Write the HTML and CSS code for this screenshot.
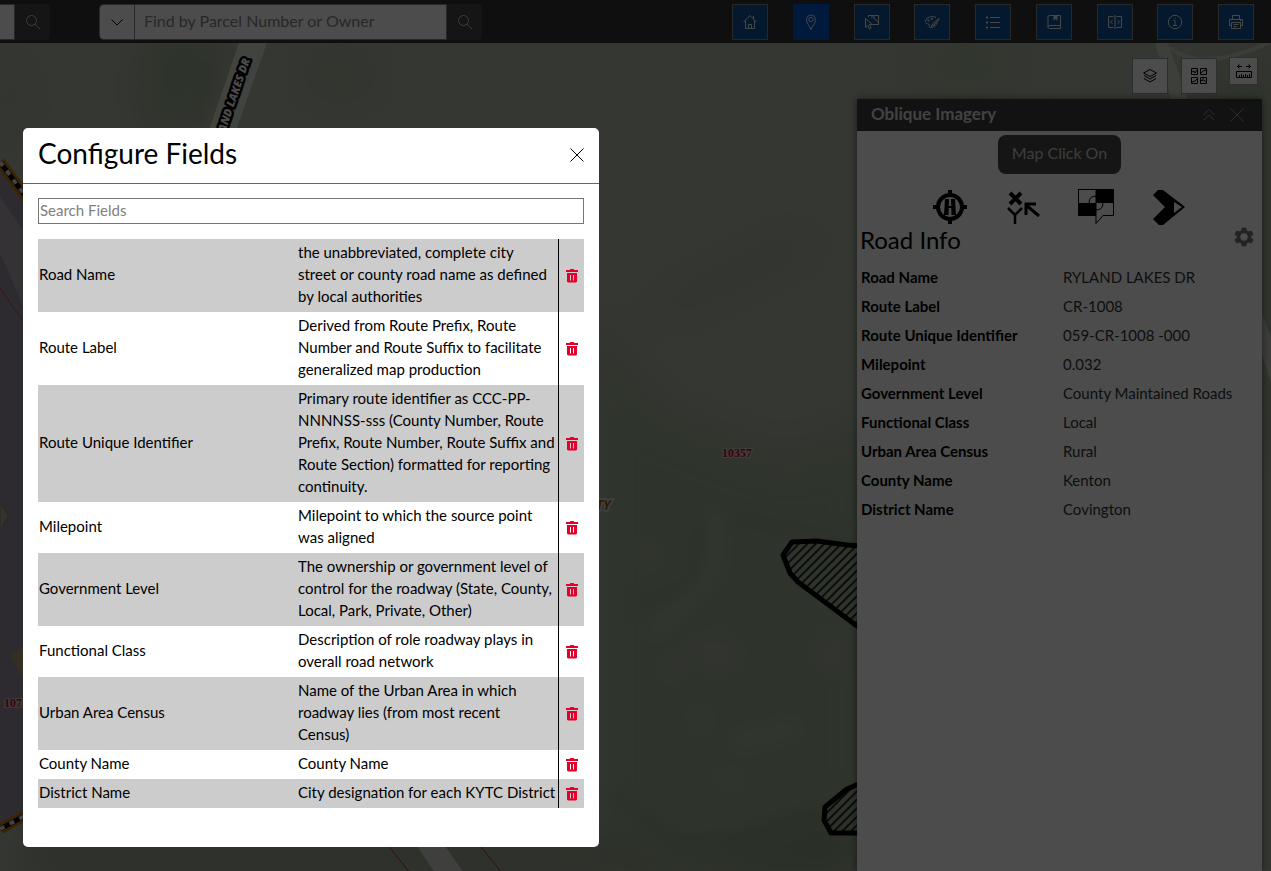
FILE: index.html
```html
<!DOCTYPE html>
<html lang="en">
<head>
  <meta charset="UTF-8" />
  <meta name="viewport" content="width=device-width, initial-scale=1.0" />
  <title>Configure Fields</title>
  <link rel="stylesheet" href="styles.css">
</head>
<body>
  <div class="app">
    <header class="topbar">
      <form class="search search-address">
        <input type="text" class="search-input" aria-label="Find address">
        <button type="button" class="search-btn" aria-label="Search address">
          <svg class="icon" viewBox="0 0 16 16"><circle cx="6.500" cy="6.500" r="5"/><path d="M10 10l5 5"/></svg>
        </button>
      </form>
      <form class="search search-parcel">
        <button type="button" class="search-menu" aria-label="Search in">
          <svg class="icon" viewBox="0 0 16 16"><path d="M2.500 5.500l5.500 5.500 5.500-5.500"/></svg>
        </button>
        <input type="text" class="search-input" placeholder="Find by Parcel Number or Owner" aria-label="Find by Parcel Number or Owner">
        <button type="button" class="search-btn" aria-label="Search parcels">
          <svg class="icon" viewBox="0 0 16 16"><circle cx="6.500" cy="6.500" r="5"/><path d="M10 10l5 5"/></svg>
        </button>
      </form>

      <nav class="tools">
        <button type="button" class="tool" aria-label="Home">
          <svg class="icon" viewBox="0 0 16 16"><path d="M1.500 8L8 1.500 14.500 8M3.500 6.500v8h9v-8M6.500 14.500v-4h3v4M11.500 2v3"/></svg>
        </button>
        <button type="button" class="tool active" aria-label="Location">
          <svg class="icon" viewBox="0 0 16 16"><path d="M8 15.500C6.500 11.500 3.500 9.500 3.500 5.500a4.500 4.500 0 0 1 9 0c0 4-3 6-4.500 10z"/><circle cx="8" cy="5.500" r="2.200"/></svg>
        </button>
        <button type="button" class="tool" aria-label="Select">
          <svg class="icon" viewBox="0 0 16 16"><path d="M4.500 3V1.500h10v9H9M10 1.500v3l4.500 4M8 1.500v3"/><path d="M1.500 4.500v9l2.500-2 1.500 3.500 1.500-1L5.500 10.500H8.500z"/></svg>
        </button>
        <button type="button" class="tool" aria-label="Draw">
          <svg class="icon" viewBox="0 0 16 16"><path d="M12 3.500C9 1.500 1.500 3 1.500 7.500c0 3 3 2 3.500 3s-.5 3 2 3c2 0 5-1.500 6.500-5"/><path d="M15 4.500l-6 5-1.500 2.500L10 11l5-5.500z"/><circle cx="4.500" cy="6.500" r=".7"/><circle cx="8" cy="5" r=".7"/></svg>
        </button>
        <button type="button" class="tool" aria-label="Legend">
          <svg class="icon" viewBox="0 0 16 16"><path d="M5 3.500h10M5 8.500h10M5 13.500h10"/><path class="fill" d="M1 2.500h2v2H1zM1 7.500h2v2H1zM1 12.500h2v2H1z"/></svg>
        </button>
        <button type="button" class="tool" aria-label="Bookmarks">
          <svg class="icon" viewBox="0 0 16 16"><path d="M14.500 11.500v-10h-11a1.500 1.500 0 0 0-1.500 1.500v10a1.500 1.500 0 0 0 1.500 1.500h11v-3h-11a1.500 1.500 0 0 0-1.500 1.500"/><path class="fill" d="M7.500 1.500h4v5l-2-1.500-2 1.500z"/></svg>
        </button>
        <button type="button" class="tool" aria-label="Swipe">
          <svg class="icon" viewBox="0 0 16 16"><path d="M6.500 2.500h-5v11h5M9.500 2.500h5v11h-5M8 1v14M5.500 6L3.500 8l2 2M10.500 6l2 2-2 2"/></svg>
        </button>
        <button type="button" class="tool" aria-label="About">
          <svg class="icon" viewBox="0 0 16 16"><circle cx="8" cy="8" r="6.700"/><path d="M6.500 6.500H8v5M6 11.500h4M7.500 4.500h1"/></svg>
        </button>
        <button type="button" class="tool" aria-label="Print">
          <svg class="icon" viewBox="0 0 16 16"><path d="M4.500 5V1.500h7V5M3.500 11.500h-2v-6h13v6h-2M3.500 8.500h9v6h-9zM5.500 10.500h5M5.500 12.500h3M12 6.500h1"/></svg>
        </button>
      </nav>
    </header>

    <main class="map">
      <svg class="map-canvas" aria-hidden="true">
        <defs>
          <filter id="soft" x="-30%" y="-30%" width="160%" height="160%"><feGaussianBlur stdDeviation="22"/></filter>
          <filter id="edge" x="-30%" y="-30%" width="160%" height="160%"><feGaussianBlur stdDeviation="7"/></filter>
          <pattern id="hatch" width="6" height="6" patternUnits="userSpaceOnUse" patternTransform="rotate(45)">
            <path d="M1 0v6" stroke="#000" stroke-width="1.500"/>
          </pattern>
        </defs>
        <rect width="100%" height="100%" fill="#b2b8a8"/>
        <!-- woods -->
        <g filter="url(#soft)">
          <path d="M590 260l60 100 80 35 60 20 90-40v470H590z" fill="#9caf93"/>
          <path d="M150-10h80l-60 110H150z" fill="#93a888"/>
          <path d="M0 20h20v70H0z" fill="#9db491"/>
          <path d="M310 10h60v40h-60z" fill="#9db193"/>
          <path d="M650 260l140-70 40 10-170 80z" fill="#a2ab99"/>
          <path d="M600 790l80 30 180-60v80H600z" fill="#8a9b80"/>
          <path d="M920 0h90v40h-90z" fill="#9fb592"/>
          <path d="M1200 30l80-20v400h-40z" fill="#9aad90"/>
          <path d="M20 790h600v50H20z" fill="#95a38b"/>
        </g>
        <g filter="url(#edge)" fill="none" stroke="#899b80" stroke-width="12">
          <path d="M210 20l-15 60M610 750l70 50 70-5 70-25M700 480l-5 60-60 24M730 475l110 20" opacity=".5"/>
          <path d="M718 470l-5 60-60 60M735 700l60-15" stroke="#b0bca6" opacity=".5"/>
        </g>
        <g filter="url(#edge)" fill="#b5afac" opacity=".6">
          <path d="M690 600l35-5 15 20-30 12zM665 620l20-5-10 22zM825 590l20 10v30l-25-10zM690 670l18 5-5 12zM770 420l20 10-15 8zM640 500l15 10-5 15zM715 735l20-4v9z"/>
        </g>
        <!-- subdivision -->
        <path d="M0 124l30 40v605L0 786z" fill="#9c92a0"/>
        <path d="M0 154l30 44v80L0 210z" fill="#b2a9b5"/>
        <path d="M0 245l30 43" stroke="#c04040" fill="none"/>
        <path d="M0 460l8 12-8 16z" fill="#b5aa90" stroke="#8d8575"/>
        <path d="M10 612l15-9v36z" fill="#b09d74"/>
        <!-- county line -->
        <g fill="none">
          <path d="M0 119l30 40" stroke="#c57b16" stroke-width="11"/>
          <path d="M0 119l30 40" stroke="#000" stroke-width="5"/>
          <path d="M0 119l30 40" stroke="#ddd" stroke-width="4" stroke-dasharray="5 6"/>
          <path d="M0 786l30-16" stroke="#c57b16" stroke-width="11"/>
          <path d="M0 786l30-16" stroke="#000" stroke-width="5"/>
          <path d="M0 786l30-16" stroke="#ddd" stroke-width="4" stroke-dasharray="5 6"/>
        </g>
        <!-- roads -->
        <path d="M239 0h28l-32 90h-27z" fill="#dadfd2"/>
        <path d="M415 800h28l28 40h-29z" fill="#d3d3cb"/>
        <path d="M386 800l24 30M478 800l24 30" stroke="#a03838" fill="none"/>
        <path d="M1155 0h13l20 58h-16z" fill="#cbd3c5"/>
        <path d="M1170 5q20 15 50 10t51-17" stroke="#c5cdbf" stroke-width="4" fill="none"/>
        <path d="M1260 265l11 30v45l-11-35z" fill="#cdd3c8"/>
        <!-- flood zones -->
        <g fill="url(#hatch)" stroke="#000" stroke-width="5" stroke-linejoin="round">
          <path d="M792 499l25-1 30 4 30 2v94l-20-15-59-44-8-9-7-18z"/>
          <path d="M870 736l-23 10-22 18-1 13 7 13h40z"/>
        </g>
        <text class="road-label" transform="translate(250 17) rotate(-71)">RYLAND LAKES DR</text>
        <text class="parcel-label" x="722" y="414">10357</text>
        <text class="parcel-label" x="4" y="664">10750</text>
        <text class="city-label" x="611" y="467">CITY</text>
      </svg>

      <div class="map-tools">
        <button type="button" class="map-btn" aria-label="Layers">
          <svg class="icon" viewBox="0 0 16 16"><path d="M8 1.500L14.500 5 8 8.500 1.500 5zM2 7.500L8 11l6-3.500M2 10.500L8 14l6-3.500"/></svg>
        </button>
        <button type="button" class="map-btn" aria-label="Basemaps">
          <svg class="icon" viewBox="0 0 16 16"><path d="M.5.500h6v6h-6zM9.500.500h6v6h-6zM.5 9.500h6v6h-6zM9.500 9.500h6v6h-6zM1 4l2-1 1 2 2-3M10 5l2-2 3-1M1 14l3-1 2-2M10 12l2 1V10M13 12l2 2"/></svg>
        </button>
        <button type="button" class="map-btn small" aria-label="Measure">
          <svg class="icon" viewBox="0 0 16 16"><path d="M1 3.500h5M10 3.500h5M3.500 1.500l-2 2 2 2M12.500 1.500l2 2-2 2M.5 8.500h15v6H.5zM3.500 14v-2M5.500 14v-3M7.500 14v-2M9.500 14v-3M11.500 14v-2M13.500 14v-3"/></svg>
        </button>
      </div>

      <section class="panel">
        <div class="panel-head">
          <h2>Oblique Imagery</h2>
          <button type="button" class="plain-btn" aria-label="Collapse">
            <svg class="icon" viewBox="0 0 16 16"><path d="M2.500 8L8 2.500 13.500 8M2.500 13.500L8 8l5.500 5.500"/></svg>
          </button>
          <button type="button" class="plain-btn" aria-label="Close panel">
            <svg class="icon" viewBox="0 0 16 16"><path d="M1.500 1.500l13 13M14.500 1.500l-13 13"/></svg>
          </button>
        </div>
        <div class="panel-body">
          <button type="button" class="click-btn">Map Click On</button>
          <div class="modes">
            <button type="button" class="mode" aria-label="Road">
              <svg viewBox="0 0 36 36"><circle cx="18" cy="18" r="12" fill="none" stroke="#000" stroke-width="4"/><path d="M16 1h4v6h-4zM16 29h4v6h-4zM1 16h6v4H1zM29 16h6v4h-6z"/><path d="M13 10h4l-.5 16H12zM19 10h4l1 16h-4.500z"/><path d="M15 18h6" stroke="#000" stroke-width="2"/></svg>
            </button>
            <button type="button" class="mode" aria-label="Coordinates">
              <svg viewBox="0 0 36 36" fill="none" stroke="#000"><path d="M5 4l11 11M16 4L5 15" stroke-width="4"/><path d="M3 19l7 7 7-7M10 26v9" stroke-width="2.500"/><path d="M34 27L21 16M21 26V15h10" stroke-width="3"/></svg>
            </button>
            <button type="button" class="mode" aria-label="Parcel">
              <svg viewBox="0 0 36 36"><path d="M18 0h18v14H18zM0 14h18v13H0z"/><path d="M.5.500h35v26H25l-7 8V.5M.5 0v26" fill="none" stroke="#000"/><path d="M11 14q0-7 7-7M25 14q0 7-7 7" fill="none" stroke="#000"/></svg>
            </button>
            <button type="button" class="mode" aria-label="Oblique view">
              <svg viewBox="0 0 36 36"><path fill-rule="evenodd" d="M2 6l5-5h5l22 17-22 18H8l-6-6 12-12zM23 13v11l8-6z"/></svg>
            </button>
          </div>
          <div class="info-head">
            <h3>Road Info</h3>
            <button type="button" class="gear-btn" aria-label="Settings">
              <svg viewBox="0 0 24 24"><path fill-rule="evenodd" d="M9.500 2h5l.5 3 2 1 3-1 2.500 4-2.500 2v2l2.500 2-2.500 4-3-1-2 1-.5 3h-5L9 19l-2-1-3 1-2.500-4L4 13v-2L1.500 9 4 5l3 1 2-1zM12 8a4 4 0 1 0 0 8 4 4 0 1 0 0-8z"/></svg>
            </button>
          </div>
          <table class="info">
            <tr><th scope="row">Road Name</th><td>RYLAND LAKES DR</td></tr>
            <tr><th scope="row">Route Label</th><td>CR-1008</td></tr>
            <tr><th scope="row">Route Unique Identifier</th><td>059-CR-1008 -000</td></tr>
            <tr><th scope="row">Milepoint</th><td>0.032</td></tr>
            <tr><th scope="row">Government Level</th><td>County Maintained Roads</td></tr>
            <tr><th scope="row">Functional Class</th><td>Local</td></tr>
            <tr><th scope="row">Urban Area Census</th><td>Rural</td></tr>
            <tr><th scope="row">County Name</th><td>Kenton</td></tr>
            <tr><th scope="row">District Name</th><td>Covington</td></tr>
          </table>
        </div>
      </section>
    </main>
  </div>

  <svg class="sprite" aria-hidden="true">
    <symbol id="trash" viewBox="0 0 12 14">
      <path fill-rule="evenodd" d="M0 1h3.500l1-1h3l1 1H12v2H0zM1 4h10v8.500L10 13.500H2L1 12.500zM4 6v5.500h1V6zM7 6v5.500h1V6z"/>
    </symbol>
  </svg>

  <!-- Configure fields modal -->
  <div class="overlay">
    <div class="modal" role="dialog" aria-labelledby="modalTitle">
      <div class="modal-head">
        <h1 id="modalTitle">Configure Fields</h1>
        <button type="button" class="plain-btn" aria-label="Close">
          <svg class="icon" viewBox="0 0 16 16"><path d="M1.500 1.500l13 13M14.500 1.500l-13 13"/></svg>
        </button>
      </div>
      <div class="modal-body">
        <input type="text" class="field-search" placeholder="Search Fields" aria-label="Search Fields">
        <table class="fields">
          <tr>
            <td>Road Name</td>
            <td>the unabbreviated, complete city<br>street or county road name as defined by local authorities</td>
            <td class="remove"><button type="button" aria-label="Remove Road Name"><svg><use href="#trash"/></svg></button></td>
          </tr>
          <tr>
            <td>Route Label</td>
            <td>Derived from Route Prefix, Route Number and Route Suffix to facilitate generalized map production</td>
            <td class="remove"><button type="button" aria-label="Remove Route Label"><svg><use href="#trash"/></svg></button></td>
          </tr>
          <tr>
            <td>Route Unique Identifier</td>
            <td>Primary route identifier as CCC-PP-NNNNSS-sss (County Number, Route Prefix, Route Number, Route Suffix and Route Section) formatted for reporting continuity.</td>
            <td class="remove"><button type="button" aria-label="Remove Route Unique Identifier"><svg><use href="#trash"/></svg></button></td>
          </tr>
          <tr>
            <td>Milepoint</td>
            <td>Milepoint to which the source point was aligned</td>
            <td class="remove"><button type="button" aria-label="Remove Milepoint"><svg><use href="#trash"/></svg></button></td>
          </tr>
          <tr>
            <td>Government Level</td>
            <td>The ownership or government level of control for the roadway (State, County, Local, Park, Private, Other)</td>
            <td class="remove"><button type="button" aria-label="Remove Government Level"><svg><use href="#trash"/></svg></button></td>
          </tr>
          <tr>
            <td>Functional Class</td>
            <td>Description of role roadway plays in overall road network</td>
            <td class="remove"><button type="button" aria-label="Remove Functional Class"><svg><use href="#trash"/></svg></button></td>
          </tr>
          <tr>
            <td>Urban Area Census</td>
            <td>Name of the Urban Area in which roadway lies (from most recent<br>Census)</td>
            <td class="remove"><button type="button" aria-label="Remove Urban Area Census"><svg><use href="#trash"/></svg></button></td>
          </tr>
          <tr>
            <td>County Name</td>
            <td>County Name</td>
            <td class="remove"><button type="button" aria-label="Remove County Name"><svg><use href="#trash"/></svg></button></td>
          </tr>
          <tr>
            <td>District Name</td>
            <td>City designation for each KYTC District</td>
            <td class="remove"><button type="button" aria-label="Remove District Name"><svg><use href="#trash"/></svg></button></td>
          </tr>
        </table>
      </div>
    </div>
  </div>
</body>
</html>
```
FILE: styles.css
```css
* {
  box-sizing: border-box;
}
body {
  margin: 0;
  font-family: Lato, "Liberation Sans", sans-serif;
  font-size: 15px;
  line-height: 22px;
  color: #000;
  overflow: hidden;
}
button, input {
  font: inherit;
  color: inherit;
}
button {
  padding: 0;
  border: none;
  background: none;
  cursor: pointer;
}
h1, h2, h3 {
  margin: 0;
  font-weight: normal;
}
table {
  border-collapse: collapse;
  width: 100%;
}
.icon {
  display: block;
  width: 16px;
  height: 16px;
  fill: none;
  stroke: currentColor;
}
.icon .fill {
  fill: currentColor;
  stroke: none;
}
.sprite {
  display: none;
}
.app {
  display: flex;
  flex-direction: column;
  height: 100vh;
}

/* top bar */
.topbar {
  display: flex;
  align-items: center;
  height: 43px;
  padding-right: 17px;
  background: #333;
}
.search {
  display: flex;
  height: 36px;
}
.search-address {
  width: 50px;
}
.search-parcel {
  width: 383px;
  margin-left: 49px;
}
.search-input {
  flex: 1;
  min-width: 0;
  padding: 0 9px 2px;
  border: 1px solid #888;
  border-radius: 0;
  background: #fff;
  font-size: 16px;
}
.search-address .search-input {
  padding: 0;
  border-left: none;
}
.search-input::placeholder {
  color: #858585;
}
.search-menu, .search-btn {
  display: flex;
  align-items: center;
  justify-content: center;
  width: 35px;
}
.search-menu {
  border: 1px solid #888;
  border-right: none;
  border-radius: 5px 0 0 5px;
  background: #fff;
}
.search-btn {
  border-radius: 0 4px 4px 0;
  background: #484848;
  color: #ccc;
}
.tools {
  display: flex;
  justify-content: space-between;
  width: 522px;
  margin-left: auto;
}
.tool {
  display: flex;
  align-items: center;
  justify-content: center;
  width: 36px;
  height: 36px;
  border: 1px solid #888;
  background: #0e5399;
  color: #eee;
}
.tool.active {
  border-color: #0058d0;
  background: #0058d0;
}

/* map */
.map {
  position: relative;
  flex: 1;
}
.map-canvas {
  position: absolute;
  width: 100%;
  height: 100%;
}
.road-label {
  font: 900 italic 11px "Open Sans", sans-serif;
  text-anchor: end;
  fill: #fff;
  stroke: #000;
  stroke-width: 5px;
  stroke-linejoin: round;
  paint-order: stroke;
}
.parcel-label {
  font: bold 12px "Liberation Serif", serif;
  fill: #c8081c;
  stroke: #ccc;
  stroke-width: 2px;
  paint-order: stroke;
}
.city-label {
  font: italic bold 14px "Open Sans", sans-serif;
  text-anchor: end;
  fill: #9a6412;
  stroke: #ddd;
  stroke-width: 3px;
  paint-order: stroke;
}
.map-tools {
  position: absolute;
  top: 14px;
  right: 13px;
  display: flex;
}
.map-btn {
  display: flex;
  align-items: center;
  justify-content: center;
  width: 36px;
  height: 36px;
  margin: 1px 13px 0 0;
  border: 1px solid #999;
  background: #fff;
}
.map-btn + .map-btn {
  margin-right: 12px;
}
.map-tools .small {
  width: 29px;
  height: 28px;
  margin: 0;
}
.map-tools .map-btn.small {
  margin: 0;
}

/* side panel */
.panel {
  position: absolute;
  top: 56px;
  right: 9px;
  bottom: 0;
  width: 405px;
  background: #fff;
  box-shadow: 0 0 8px rgba(0, 0, 0, 0.5);
}
.panel-head {
  display: flex;
  align-items: center;
  gap: 12px;
  height: 32px;
  padding: 0 17px 0 14px;
  background: #3e3e3e;
  color: #999;
}
.panel-head h2 {
  flex: 1;
  padding-bottom: 2px;
  font-size: 17px;
  font-weight: bold;
  color: #ddd;
}
.panel-body {
  display: flex;
  flex-direction: column;
  padding: 4px 3px;
}
.click-btn {
  align-self: center;
  padding: 7px 14px 10px;
  border-radius: 8px;
  background: #484848;
  color: #ccc;
  font-size: 16px;
}
.modes {
  display: flex;
  justify-content: center;
  gap: 37px;
  padding: 15px 0 1px;
}
.mode {
  width: 36px;
  height: 36px;
}
.mode svg {
  display: block;
}
.info-head {
  display: flex;
  align-items: flex-start;
  justify-content: space-between;
  padding-right: 4px;
}
.info-head h3 {
  font-size: 24px;
  line-height: 28px;
}
.gear-btn svg {
  display: block;
  width: 22px;
  height: 22px;
  fill: #777;
}
.info {
  margin-top: 9px;
}
.info th, .info td {
  padding: 3px 0 4px 1px;
  text-align: left;
}
.info th {
  width: 202px;
}
.info td {
  color: #333;
}

/* modal */
.overlay {
  position: fixed;
  inset: 0;
  background: rgba(0, 0, 0, 0.7);
}
.modal {
  position: absolute;
  top: 128px;
  left: 23px;
  width: 576px;
  padding-bottom: 39px;
  border-radius: 5px;
  background: #fff;
}
.modal-head {
  display: flex;
  align-items: center;
  justify-content: space-between;
  height: 56px;
  padding: 0 14px 2px 15px;
  border-bottom: 1px solid #666;
}
.modal-head h1 {
  padding-bottom: 3px;
  font-size: 28px;
  line-height: 32px;
}
.modal-body {
  padding: 14px 15px 0;
}
.field-search {
  display: block;
  width: 100%;
  height: 26px;
  margin-bottom: 15px;
  padding: 0 1px 2px;
  border: 1px solid #767676;
}
.field-search::placeholder {
  color: #808080;
}
.fields {
  table-layout: fixed;
}
.fields tr:nth-child(odd) {
  background: #ccc;
}
.fields td {
  padding: 2px 1px 5px;
}
.fields td:first-child {
  width: 259px;
}
.fields .remove {
  width: 26px;
  padding: 4px 0 3px 2px;
  border-left: 1px solid #000;
}
.remove button {
  display: block;
  margin: 0 auto;
}
.remove svg {
  display: block;
  width: 12px;
  height: 14px;
  fill: #e4002b;
}
```
